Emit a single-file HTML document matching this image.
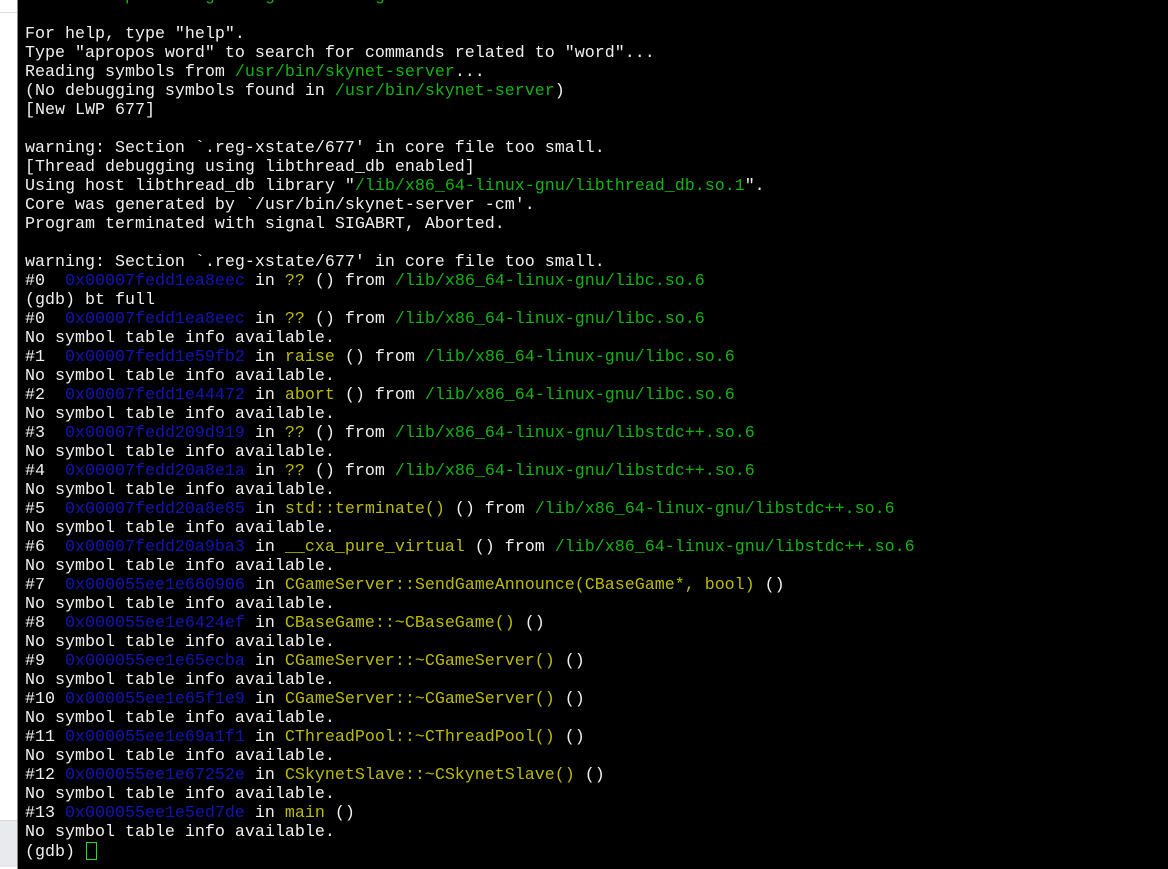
<!DOCTYPE html>
<html><head><meta charset="utf-8"><style>
html,body{margin:0;padding:0;width:1168px;height:869px;overflow:hidden;background:#000;}
.l{position:absolute;left:0;top:0;width:17px;height:869px;background:#fff;border-right:1px solid #888;}
.l .h{position:absolute;top:12px;left:0;width:17px;height:1px;background:#ddd;}
.l .g{position:absolute;top:820px;left:0;width:17px;height:46px;background:#e8eaed;border-top:1px solid #d8d8d8;}
pre{position:absolute;left:25px;top:-13px;margin:0;font-family:"Liberation Mono",monospace;font-size:16.67px;line-height:19px;color:#f0f0f0;}
.b{color:#1414b4}.y{color:#bbbb00}.g{color:#14b414}
.c{display:inline-block;width:9px;height:16px;border:1px solid #1fe01f;vertical-align:-4px;margin-left:1px;}
</style></head><body>
<div class="l"><div class="h"></div><div class="g"></div></div>
<pre><span class="g">      &lt;http://www.gnu.org/software/gdb/documentation/&gt;.</span>

For help, type "help".
Type "apropos word" to search for commands related to "word"...
Reading symbols from <span class="g">/usr/bin/skynet-server</span>...
(No debugging symbols found in <span class="g">/usr/bin/skynet-server</span>)
[New LWP 677]

warning: Section `.reg-xstate/677' in core file too small.
[Thread debugging using libthread_db enabled]
Using host libthread_db library "<span class="g">/lib/x86_64-linux-gnu/libthread_db.so.1</span>".
Core was generated by `/usr/bin/skynet-server -cm'.
Program terminated with signal SIGABRT, Aborted.

warning: Section `.reg-xstate/677' in core file too small.
#0  <span class="b">0x00007fedd1ea8eec</span> in <span class="y">??</span> () from <span class="g">/lib/x86_64-linux-gnu/libc.so.6</span>
(gdb) bt full
#0  <span class="b">0x00007fedd1ea8eec</span> in <span class="y">??</span> () from <span class="g">/lib/x86_64-linux-gnu/libc.so.6</span>
No symbol table info available.
#1  <span class="b">0x00007fedd1e59fb2</span> in <span class="y">raise</span> () from <span class="g">/lib/x86_64-linux-gnu/libc.so.6</span>
No symbol table info available.
#2  <span class="b">0x00007fedd1e44472</span> in <span class="y">abort</span> () from <span class="g">/lib/x86_64-linux-gnu/libc.so.6</span>
No symbol table info available.
#3  <span class="b">0x00007fedd209d919</span> in <span class="y">??</span> () from <span class="g">/lib/x86_64-linux-gnu/libstdc++.so.6</span>
No symbol table info available.
#4  <span class="b">0x00007fedd20a8e1a</span> in <span class="y">??</span> () from <span class="g">/lib/x86_64-linux-gnu/libstdc++.so.6</span>
No symbol table info available.
#5  <span class="b">0x00007fedd20a8e85</span> in <span class="y">std::terminate()</span> () from <span class="g">/lib/x86_64-linux-gnu/libstdc++.so.6</span>
No symbol table info available.
#6  <span class="b">0x00007fedd20a9ba3</span> in <span class="y">__cxa_pure_virtual</span> () from <span class="g">/lib/x86_64-linux-gnu/libstdc++.so.6</span>
No symbol table info available.
#7  <span class="b">0x000055ee1e660906</span> in <span class="y">CGameServer::SendGameAnnounce(CBaseGame*, bool)</span> ()
No symbol table info available.
#8  <span class="b">0x000055ee1e6424ef</span> in <span class="y">CBaseGame::~CBaseGame()</span> ()
No symbol table info available.
#9  <span class="b">0x000055ee1e65ecba</span> in <span class="y">CGameServer::~CGameServer()</span> ()
No symbol table info available.
#10 <span class="b">0x000055ee1e65f1e9</span> in <span class="y">CGameServer::~CGameServer()</span> ()
No symbol table info available.
#11 <span class="b">0x000055ee1e69a1f1</span> in <span class="y">CThreadPool::~CThreadPool()</span> ()
No symbol table info available.
#12 <span class="b">0x000055ee1e67252e</span> in <span class="y">CSkynetSlave::~CSkynetSlave()</span> ()
No symbol table info available.
#13 <span class="b">0x000055ee1e5ed7de</span> in <span class="y">main</span> ()
No symbol table info available.
(gdb) <span class="c"></span></pre>
</body></html>
